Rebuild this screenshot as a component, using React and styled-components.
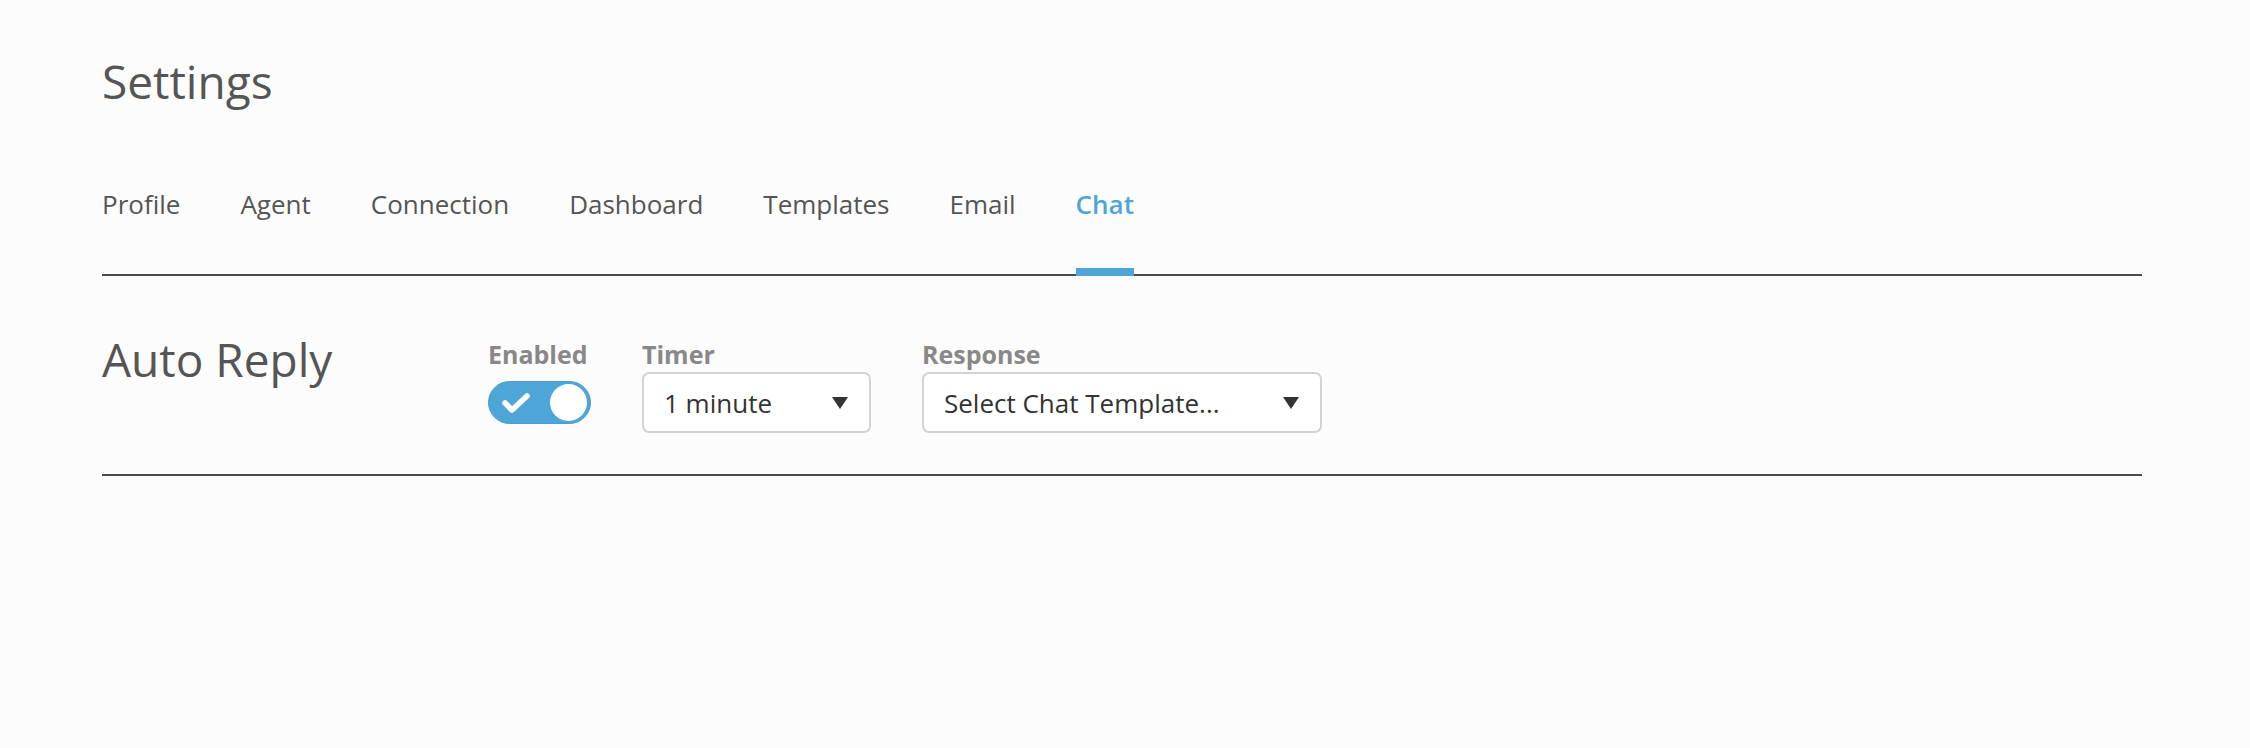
import React from 'react'
import { createGlobalStyle, styled } from 'styled-components'

const tabs = ['Profile', 'Agent', 'Connection', 'Dashboard', 'Templates', 'Email', 'Chat']

export default function App() {
  return (
    <Page>
      <GlobalStyle />
      <Title>Settings</Title>
      <Tabs>
        {tabs.map((t) => (
          <Tab key={t} $active={t === 'Chat'}>{t}</Tab>
        ))}
      </Tabs>
      <Section>
        <SectionTitle>Auto Reply</SectionTitle>
        <Field $width={103}>
          <Label>Enabled</Label>
          <Slot>
            <Toggle>
              <svg width="30" height="24" viewBox="0 0 30 24">
                <polyline points="4,12 11,19 26,5" fill="none" stroke="#fff" strokeWidth="5.5" strokeLinecap="round" strokeLinejoin="round" />
              </svg>
              <Knob />
            </Toggle>
          </Slot>
        </Field>
        <Field $width={229}>
          <Label>Timer</Label>
          <Select>
            <span>1 minute</span>
            <Arrow />
          </Select>
        </Field>
        <Field $width={400}>
          <Label>Response</Label>
          <Select>
            <span>Select Chat Template...</span>
            <Arrow />
          </Select>
        </Field>
      </Section>
    </Page>
  )
}

const Arrow = () => (
  <svg width="16" height="12" viewBox="0 0 16 12">
    <polygon points="0,0 16,0 8,12" fill="#333" />
  </svg>
)

const GlobalStyle = createGlobalStyle`
  body {
    margin: 0;
    background: #fcfcfc;
    font-family: "Open Sans", "Noto Sans", sans-serif;
  }
`

const Page = styled.div`
  width: 2040px;
  margin-left: 102px;
  padding-top: 58px;
  height: 690px;
`

const Title = styled.h1`
  margin: 0;
  font-size: 46px;
  line-height: 1;
  font-weight: 400;
  color: #555;
`

const Tabs = styled.div`
  display: flex;
  gap: 60px;
  margin-top: 87px;
  border-bottom: 2px solid #474953;
`

const Tab = styled.div`
  font-size: 26px;
  line-height: 1;
  padding-bottom: 51px;
  margin-bottom: -2px;
  color: ${(p) => (p.$active ? '#4ea6d8' : '#555')};
  font-weight: ${(p) => (p.$active ? 600 : 400)};
  border-bottom: 8px solid ${(p) => (p.$active ? '#4ea6d8' : 'transparent')};
`

const Section = styled.div`
  display: flex;
  align-items: flex-start;
  gap: 51px;
  padding: 60px 0 41px;
  border-bottom: 2px solid #474953;
`

const SectionTitle = styled.h2`
  margin: 0 -51px 0 0;
  width: 386px;
  font-size: 46px;
  line-height: 1;
  font-weight: 400;
  color: #555;
`

const Field = styled.div`
  display: flex;
  flex-direction: column;
  width: ${(p) => p.$width}px;
  padding-top: 6px;
`

const Label = styled.div`
  font-size: 25px;
  line-height: 1;
  font-weight: 700;
  color: #888;
  margin-bottom: 5px;
  white-space: nowrap;
`

const Slot = styled.div`
  height: 61px;
  display: flex;
  align-items: center;
`

const Toggle = styled.div`
  box-sizing: border-box;
  width: 104px;
  height: 43px;
  border-radius: 22px;
  background: #4ea6d8;
  border: 1px solid #4a9dcf;
  display: flex;
  align-items: center;
  justify-content: space-between;
  padding: 0 3px 0 12px;
`

const Knob = styled.div`
  width: 37px;
  height: 37px;
  border-radius: 50%;
  background: #fff;
`

const Select = styled.div`
  box-sizing: border-box;
  height: 61px;
  border: 2px solid #d3d3d3;
  border-radius: 7px;
  background: #fff;
  display: flex;
  align-items: center;
  justify-content: space-between;
  padding: 0 21px 0 20px;
  font-size: 26px;
  color: #333;
`
